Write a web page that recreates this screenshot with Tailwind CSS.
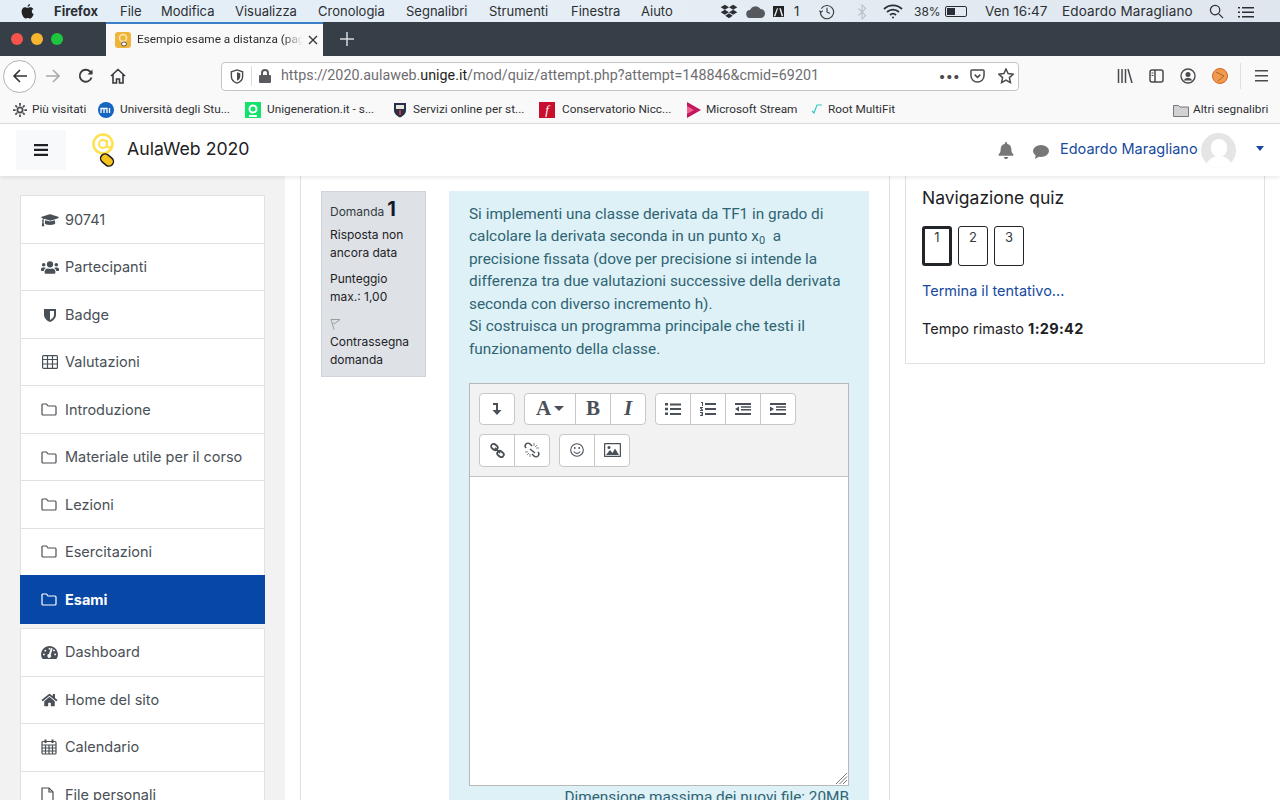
<!DOCTYPE html>
<html lang="it">
<head>
<meta charset="UTF-8">
<title>Esempio esame a distanza</title>
<script src="https://cdn.jsdelivr.net/npm/@tailwindcss/browser@4"></script>
</head>
<body class="bg-white">
<div class="w-[1280px] h-[800px] overflow-hidden flex flex-col font-['Inter','Liberation_Sans',sans-serif] text-[#1d2125]">

  <!-- macOS menu bar -->
  <div class="h-[22px] flex items-center bg-gradient-to-r from-[#e3eef7] via-[#e6eef5] to-[#dfe6ee] text-[13px] text-[#2b2f33] shrink-0 pl-[21px] pt-[1px]">
    <svg class="w-[13px] h-[15px] mr-[20px] shrink-0" viewBox="0 0 24 28" fill="#222"><path d="M17 6c-2 0-3 1.200-5 1.200S9 6 7 6C4 6 1 9 1 14c0 6 4 13 7.500 13 1.500 0 2.300-1 4-1s2.300 1 4 1C20 27 23 21 23.500 19c-2-1-3.500-2.800-3.500-5 0-2 1-3.700 3-4.800C21.500 7 19.500 6 17 6zM16.500 0C14 .3 12 2.500 12.200 5.300 14.800 5.300 17 3 16.500 0z"/></svg>
    <span class="font-bold w-[66px] shrink-0">Firefox</span>
    <span class="w-[41px] shrink-0">File</span>
    <span class="w-[74px] shrink-0">Modifica</span>
    <span class="w-[83px] shrink-0">Visualizza</span>
    <span class="w-[88px] shrink-0">Cronologia</span>
    <span class="w-[83px] shrink-0">Segnalibri</span>
    <span class="w-[82px] shrink-0">Strumenti</span>
    <span class="w-[70px] shrink-0">Finestra</span>
    <span class="w-[79px] shrink-0">Aiuto</span>
    <!-- status icons -->
    <svg class="w-[18px] h-[15px] shrink-0" viewBox="0 0 20 18" fill="#2b2f33"><path d="M5 1l5 3-5 3-5-3zM15 1l5 3-5 3-5-3zM5 7l5 3-5 3-5-3zM15 7l5 3-5 3-5-3zM10 11l4.500 3L10 17l-4.500-3z"/></svg>
    <svg class="w-[21px] h-[13px] ml-[7px] shrink-0" viewBox="0 0 20 13" fill="#55595e"><path d="M5 13a4 4 0 0 1-.5-8A6 6 0 0 1 15 4a4.500 4.500 0 0 1 0 9z"/></svg>
    <svg class="w-[11px] h-[13px] ml-[7px] shrink-0" viewBox="0 0 14 14"><path fill="#222" d="M0 0h14v14H0z"/><path fill="#e4ecf4" d="M5 3h1.500L3 13H1zM8 3h2l3 10h-2z"/></svg>
    <span class="ml-[10px] w-[24px] shrink-0">1</span>
    <svg class="w-[18px] h-[17px] shrink-0" viewBox="0 0 18 18" fill="none" stroke="#3c4044" stroke-width="1.200"><path d="M3 6a7 7 0 1 1-1 4M1 8l1.500 2L4.500 8"/><path d="M9 5v4.500l3 1.500"/></svg>
    <svg class="w-[10px] h-[16px] ml-[21px] shrink-0" viewBox="0 0 10 18" fill="none" stroke="#b9bfc6" stroke-width="1.200"><path d="M1 5l8 8-4 4V1l4 4-8 8"/></svg>
    <svg class="w-[20px] h-[15px] ml-[16px] shrink-0" viewBox="0 0 20 15" fill="none" stroke="#2b2f33" stroke-width="1.800"><path d="M1 5a13 13 0 0 1 18 0M4 8a9 9 0 0 1 12 0M7 11a4.500 4.500 0 0 1 6 0"/><circle cx="10" cy="13.500" r="1" fill="#2b2f33" stroke="none"/></svg>
    <span class="ml-[11px] text-[12px] w-[31px] shrink-0">38%</span>
    <div class="w-[22px] h-[11px] border border-[#2b2f33] rounded-[2px] p-[1px] shrink-0"><div class="w-[8px] h-full bg-[#2b2f33]"></div></div>
    <span class="ml-[18px] w-[63px] whitespace-nowrap shrink-0 text-[13.500px]">Ven 16:47</span>
    <span class="ml-[14px] w-[132px] whitespace-nowrap shrink-0 text-[13.500px] tracking-[0.15px]">Edoardo Maragliano</span>
    <svg class="w-[15px] h-[15px] ml-[15px] shrink-0" viewBox="0 0 16 16" fill="none" stroke="#2b2f33" stroke-width="1.300"><circle cx="6.500" cy="6.500" r="5"/><path d="M10.500 10.500L15 15"/></svg>
    <svg class="w-[16px] h-[12px] ml-[14px] shrink-0" viewBox="0 0 16 12" fill="#2b2f33"><path d="M0 1h2v1.500H0zM4 1h12v1.500H4zM0 5.500h2V7H0zM4 5.500h12V7H4zM0 10h2v1.500H0zM4 10h12v1.500H4z"/></svg>
  </div>

  <!-- Tab strip -->
  <div class="h-[34px] flex bg-[#363f48] shrink-0">
    <div class="w-[106px] flex items-center gap-[8px] pl-[11px] shrink-0">
      <span class="w-[12px] h-[12px] rounded-full bg-[#f4544c]"></span>
      <span class="w-[12px] h-[12px] rounded-full bg-[#f6b52f]"></span>
      <span class="w-[12px] h-[12px] rounded-full bg-[#1ec63f]"></span>
    </div>
    <div class="w-[217px] h-[34px] bg-[#f9f9fa] border-t-2 border-[#3a7fc8] flex items-center pl-[9px] text-[11.800px] text-[#2c2c2e] font-['Roboto',sans-serif] shrink-0">
      <span class="w-[16px] h-[16px] rounded-[3px] bg-[#f0b43c] mr-[6px] shrink-0 flex items-center justify-center">
        <svg class="w-[12px] h-[14px]" viewBox="0 0 12 14"><circle cx="6" cy="5" r="3.500" fill="none" stroke="#fbe9b0" stroke-width="1.500"/><ellipse cx="7" cy="11" rx="2.500" ry="2" fill="#fff" stroke="#333" stroke-width=".8"/></svg>
      </span>
      <span class="whitespace-nowrap overflow-hidden w-[166px] shrink-0 [mask-image:linear-gradient(to_right,black_88%,transparent)]">Esempio esame a distanza (pagina 1)</span>
      <svg class="w-[10px] h-[10px] ml-[5px] shrink-0" viewBox="0 0 10 10" stroke="#333" stroke-width="1.300"><path d="M1 1l8 8M9 1l-8 8"/></svg>
    </div>
    <svg class="w-[14px] h-[14px] ml-[17px] mt-[10px]" viewBox="0 0 14 14" stroke="#d6d9dc" stroke-width="1.500"><path d="M7 0v14M0 7h14"/></svg>
  </div>

  <!-- Nav bar -->
  <div class="h-[38px] flex items-center bg-[#f9f9fa] shrink-0 pl-[3px] pt-[2px] text-[#3d3d40]">
    <div class="w-[33px] h-[33px] rounded-full border border-[#b1b1b3] bg-white flex items-center justify-center shrink-0">
      <svg class="w-[16px] h-[16px]" viewBox="0 0 16 16" fill="none" stroke="#333" stroke-width="1.600"><path d="M15 8H2M8 2L2 8l6 6"/></svg>
    </div>
    <svg class="w-[16px] h-[16px] ml-[9px] shrink-0" viewBox="0 0 16 16" fill="none" stroke="#a9a9ab" stroke-width="1.600"><path d="M1 8h13M8 2l6 6-6 6"/></svg>
    <svg class="w-[16px] h-[16px] ml-[17px] shrink-0" viewBox="0 0 16 16" fill="none" stroke="#38383d" stroke-width="1.800"><path d="M13.500 9.500A6 6 0 1 1 12 3.500L14 5.500"/><path d="M14.500 1.500v5h-5" fill="#38383d" stroke="none"/></svg>
    <svg class="w-[16px] h-[16px] ml-[16px] shrink-0" viewBox="0 0 16 16" fill="none" stroke="#38383d" stroke-width="1.600"><path d="M1 8l7-6.500L15 8M3 6.500V15h3.500v-4h3v4H13V6.500"/></svg>
    <div class="w-[798px] h-[29px] ml-[95px] bg-white border border-[#c5c5c7] rounded-[4px] flex items-center shrink-0 pl-[8px]">
      <svg class="w-[14px] h-[15px] shrink-0" viewBox="0 0 14 16" fill="none" stroke="#4a4a4f" stroke-width="1.500"><path d="M7 1l6 2v5c0 4-3 6-6 7-3-1-6-3-6-7V3z"/><path d="M7 3.500l3.500 1V8c0 2-1.500 3.500-3.500 4.500z" fill="#4a4a4f" stroke="none"/></svg>
      <div class="w-px h-[20px] bg-[#dcdcde] ml-[7px] shrink-0"></div>
      <svg class="w-[12px] h-[14px] ml-[7px] shrink-0" viewBox="0 0 12 14" fill="#5b5b5f"><path d="M2 6V4a4 4 0 0 1 8 0v2h1a1 1 0 0 1 1 1v6a1 1 0 0 1-1 1H1a1 1 0 0 1-1-1V7a1 1 0 0 1 1-1zm2 0h4V4a2 2 0 0 0-4 0z"/></svg>
      <span class="ml-[10px] text-[14.300px] text-[#6e6e72] font-['Roboto',sans-serif] whitespace-nowrap w-[660px] shrink-0">https://2020.aulaweb.<span class="text-[#1f1f22]">unige.it</span>/mod/quiz/attempt.php?attempt=148846&amp;cmid=69201</span>
      <span class="ml-[-2px] text-[#4a4a4f] text-[13px] font-bold tracking-[1px] w-[20px] leading-[10px] shrink-0 whitespace-nowrap">•••</span>
      <svg class="w-[15px] h-[14px] ml-[11px] shrink-0" viewBox="0 0 16 15" fill="none" stroke="#4a4a4f" stroke-width="1.600"><path d="M2 1h12a1 1 0 0 1 1 1v5a7 7 0 0 1-14 0V2a1 1 0 0 1 1-1z"/><path d="M5 6l3 3 3-3"/></svg>
      <svg class="w-[16px] h-[16px] ml-[13px] shrink-0" viewBox="0 0 16 16" fill="none" stroke="#4a4a4f" stroke-width="1.500"><path d="M8 1l2.100 4.600 5 .6-3.700 3.400 1 5L8 12.100 3.600 14.600l1-5L.9 6.200l5-.6z"/></svg>
    </div>
    <svg class="w-[16px] h-[14px] ml-[98px] shrink-0" viewBox="0 0 15 14" stroke="#4a4a4f" stroke-width="1.500" fill="none"><path d="M1 0v14M4.500 0v14M8 0v14M10.500 0l4 14"/></svg>
    <svg class="w-[17px] h-[14px] ml-[15px] shrink-0" viewBox="0 0 15 14" fill="none" stroke="#4a4a4f" stroke-width="1.500"><rect x="1" y="1" width="13" height="12" rx="2"/><path d="M6 1v12"/><path d="M2.500 4H4.500M2.500 6.500H4.500" stroke-width="1"/></svg>
    <svg class="w-[16px] h-[16px] ml-[15px] shrink-0" viewBox="0 0 16 16"><circle cx="8" cy="8" r="7" fill="none" stroke="#4a4a4f" stroke-width="1.400"/><circle cx="8" cy="6.500" r="2.500" fill="#4a4a4f"/><path d="M3.500 12.500a5 5 0 0 1 9 0z" fill="#4a4a4f"/></svg>
    <svg class="w-[16px] h-[16px] ml-[16px] shrink-0" viewBox="0 0 16 16"><circle cx="8" cy="8" r="7.500" fill="#ef9a4c" stroke="#d9632b"/><path d="M4 4l8 4-6 5" fill="none" stroke="#a9622c"/></svg>
    <div class="w-px h-[26px] bg-[#e0e0e2] ml-[12px] shrink-0"></div>
    <svg class="w-[13px] h-[12px] ml-[14px] shrink-0" viewBox="0 0 13 12" fill="#4a4a4f"><path d="M0 0h13v1.600H0zM0 5h13v1.600H0zM0 10h13v1.600H0z"/></svg>
  </div>

  <!-- Bookmarks bar -->
  <div class="h-[30px] flex items-center bg-[#f9f9fa] border-b border-[#dcdcde] shrink-0 pl-[13px] pt-[3px] text-[11.800px] text-[#303033] font-['Roboto',sans-serif] whitespace-nowrap">
    <svg class="w-[14px] h-[14px] shrink-0" viewBox="0 0 16 16" fill="#4a4a4f"><path d="M8 4a4 4 0 1 0 0 8 4 4 0 0 0 0-8zm0 2a2 2 0 1 1 0 4 2 2 0 0 1 0-4z"/><path d="M7 0h2v3H7zM7 13h2v3H7zM0 7h3v2H0zM13 7h3v2h-3zM2 3.400L3.400 2l2 2L4 5.400zM10.600 12L12 10.600l2 2L12.600 14zM2 12.600l2-2L5.400 12l-2 2zM10.600 4l2-2L14 3.400l-2 2z"/></svg>
    <span class="ml-[5px] w-[66px] shrink-0">Più visitati</span>
    <svg class="w-[16px] h-[16px] shrink-0" viewBox="0 0 16 16"><circle cx="8" cy="8" r="8" fill="#1565c0"/><path d="M3 11V6.500h6V11M6 6.500V11M11.500 6v5" stroke="#fff" stroke-width="1.300" fill="none"/></svg>
    <span class="ml-[6px] w-[125px] shrink-0">Università degli Stu...</span>
    <div class="w-[16px] h-[16px] bg-[#13e26b] flex items-center justify-center shrink-0">
      <svg class="w-[10px] h-[13px]" viewBox="0 0 10 13" fill="none" stroke="#fff" stroke-width="2"><circle cx="5" cy="5" r="3.500"/><path d="M1 12h8"/></svg>
    </div>
    <span class="ml-[6px] w-[126px] shrink-0">Unigeneration.it - s...</span>
    <svg class="w-[14px] h-[16px] shrink-0" viewBox="0 0 14 16"><path d="M1 1h12v7c0 4-3 6-6 7.500C4 14 1 12 1 8z" fill="#26304a"/><path d="M3 3h8v4H3z" fill="#e9e6dc"/><path d="M6 8h2v5H6z" fill="#c33"/></svg>
    <span class="ml-[6px] w-[126px] shrink-0">Servizi online per st...</span>
    <div class="w-[16px] h-[16px] bg-[#c8102e] text-white flex items-center justify-center italic font-['Liberation_Serif',serif] text-[13px] shrink-0">f</div>
    <span class="ml-[7px] w-[124px] shrink-0">Conservatorio Nicc...</span>
    <svg class="w-[16px] h-[16px] shrink-0" viewBox="0 0 16 16"><path d="M1 0l14 8L1 16z" fill="#c2185b"/><path d="M1 4l7 4-7 4z" fill="#f06292"/></svg>
    <span class="ml-[4px] w-[105px] shrink-0">Microsoft Stream</span>
    <svg class="w-[12px] h-[12px] shrink-0" viewBox="0 0 12 12" fill="none" stroke="#35c9c0" stroke-width="1.200"><path d="M1 7l2 2 3-8h5"/></svg>
    <span class="ml-[5px] w-[345px] shrink-0">Root MultiFit</span>
    <svg class="w-[16px] h-[13px] shrink-0" viewBox="0 0 16 13"><path d="M.5 1.500h5l1.500 1.500h8.500v9.500H.5z" fill="#d2d2d4" stroke="#77777b"/></svg>
    <span class="ml-[4px] shrink-0">Altri segnalibri</span>
  </div>

  <!-- Moodle header -->
  <header class="h-[52px] relative z-10 bg-white shadow-[0_2px_4px_rgba(0,0,0,0.08)] flex items-center shrink-0 pl-[16px]">
    <div class="w-[50px] h-[40px] bg-[#f8f9fa] flex items-center justify-center shrink-0">
      <svg class="w-[14px] h-[12px]" viewBox="0 0 14 12" fill="#1d2125"><path d="M0 0h14v2.300H0zM0 4.800h14v2.300H0zM0 9.700h14V12H0z"/></svg>
    </div>
    <svg class="w-[26px] h-[36px] ml-[25px] shrink-0" viewBox="0 0 26 36"><circle cx="12" cy="12" r="9.500" fill="none" stroke="#ffe14d" stroke-width="2.500"/><circle cx="12" cy="12" r="4" fill="none" stroke="#ffe14d" stroke-width="2"/><path d="M16 8v6c0 2 3 2 3 0" fill="none" stroke="#ffe14d" stroke-width="2"/><rect x="9" y="23.500" width="14" height="9" rx="4.500" transform="rotate(40 16 28)" fill="#f6c21c" stroke="#1d1d1d" stroke-width="1.500"/></svg>
    <span class="ml-[10px] mb-[2px] text-[17.700px] text-[#1d2125] whitespace-nowrap w-[123px] shrink-0">AulaWeb 2020</span>
    <svg class="w-[16px] h-[17px] ml-[748px] shrink-0" viewBox="0 0 448 512" fill="#777"><path d="M224 512c35 0 64-29 64-64H160c0 35 29 64 64 64zm215-150c-19-21-55-52-55-154 0-78-54-140-128-155V32a32 32 0 1 0-64 0v21C118 68 64 130 64 208c0 102-36 133-55 154-6 6-9 14-9 22 0 16 13 32 32 32h384c19 0 32-16 32-32 0-8-3-16-9-22z"/></svg>
    <svg class="w-[16px] h-[14px] ml-[19px] mt-[3px] shrink-0" viewBox="0 0 16 14" fill="#777"><ellipse cx="8" cy="6" rx="8" ry="6"/><path d="M3 9l-1 5 5-3z"/></svg>
    <span class="ml-[11px] mb-[2px] text-[14.500px] text-[#174a9e] whitespace-nowrap w-[136px] shrink-0">Edoardo Maragliano</span>
    <div class="w-[35px] h-[35px] rounded-full bg-[#e5e5e5] overflow-hidden flex flex-col items-center shrink-0 ml-[5px]">
      <div class="w-[16px] h-[18px] rounded-full bg-white mt-[6px] shrink-0"></div>
      <div class="w-[28px] h-[16px] rounded-t-full bg-white mt-[-1px] shrink-0"></div>
    </div>
    <div class="ml-[20px] w-0 h-0 border-x-[4px] border-x-transparent border-t-[5px] border-t-[#174a9e] mb-[3px]"></div>
  </header>

  <!-- Page body -->
  <div class="flex-1 flex overflow-hidden">
    <!-- Sidebar -->
    <aside class="w-[285px] shrink-0 bg-[#f2f2f2] pl-[20px] pr-[20px] pt-[19px] text-[14.500px] text-[#495057]">
      <div class="bg-white border border-[#dee2e6] border-b-0">
        <div class="h-[47.500px] pt-[1px] border-b border-[#dee2e6] flex items-center pl-[20px] gap-[6px]">
          <svg class="w-[18px] h-[14px] shrink-0" viewBox="0 0 640 512" fill="#495057"><path d="M623 137L332 48a48 48 0 0 0-24 0L17 137c-23 7-23 39 0 46l51 16c-11 14-18 31-19 50-12 7-19 20-19 35 0 13 6 25 15 32L18 466c-2 10 5 20 16 20h60c10 0 18-10 16-20L83 316c9-7 15-19 15-32 0-14-7-26-18-34 1-16 9-29 21-38l207 64c10 3 29 6 48 0l267-82c23-7 23-39 0-46zM352 306c-29 9-53 4-64 0l-145-44-14 114c0 36 86 64 191 64s191-28 191-64l-14-114z"/></svg>
          <span>90741</span>
        </div>
        <div class="h-[47.500px] pt-[1px] border-b border-[#dee2e6] flex items-center pl-[20px] gap-[6px]">
          <svg class="w-[18px] h-[15px] shrink-0" viewBox="0 0 640 512" fill="#495057"><path d="M96 224a64 64 0 1 0 0-128 64 64 0 0 0 0 128zm448 0a64 64 0 1 0 0-128 64 64 0 0 0 0 128zm32 32h-64c-18 0-34 7-45 19 40 22 69 62 75 109h66c18 0 32-14 32-32v-32c0-35-29-64-64-64zm-256 0a112 112 0 1 0 0-224 112 112 0 0 0 0 224zm77 32h-8a155 155 0 0 1-138 0h-8c-64 0-115 52-115 115v29c0 26 21 48 48 48h288c26 0 48-22 48-48v-29c0-63-52-115-115-115zM173 275c-11-12-27-19-45-19H64c-35 0-64 29-64 64v32c0 18 14 32 32 32h66c6-47 35-87 75-109z"/></svg>
          <span>Partecipanti</span>
        </div>
        <div class="h-[47.500px] pt-[1px] border-b border-[#dee2e6] flex items-center pl-[20px] gap-[6px]">
          <span class="w-[18px] flex justify-center shrink-0"><svg class="w-[12px] h-[14px]" viewBox="0 0 12 14"><path d="M0 1h12v6c0 3-3 6-6 7-3-1-6-4-6-7z" fill="#495057"/><path d="M6 3v9c2-1 4-3 4-5V3z" fill="#fff"/></svg></span>
          <span>Badge</span>
        </div>
        <div class="h-[47.500px] pt-[1px] border-b border-[#dee2e6] flex items-center pl-[20px] gap-[6px]">
          <svg class="w-[18px] h-[14px] shrink-0" viewBox="0 0 18 14" fill="none" stroke="#495057" stroke-width="1.200"><rect x="1.600" y=".6" width="14.800" height="12.800" rx="1"/><path d="M1.600 4.500h14.800M1.600 9h14.800M6.500 .6v12.800M11.500 .6v12.800"/></svg>
          <span>Valutazioni</span>
        </div>
        <div class="h-[47.500px] pt-[1px] border-b border-[#dee2e6] flex items-center pl-[20px] gap-[6px]">
          <svg class="w-[16px] h-[13px] mr-[2px] shrink-0" viewBox="0 0 16 13" fill="none" stroke="#495057" stroke-width="1.200"><path d="M1 3V2a1 1 0 0 1 1-1h3.500l1.500 2h7a1 1 0 0 1 1 1v7a1 1 0 0 1-1 1H2a1 1 0 0 1-1-1z"/></svg>
          <span>Introduzione</span>
        </div>
        <div class="h-[47.500px] pt-[1px] border-b border-[#dee2e6] flex items-center pl-[20px] gap-[6px]">
          <svg class="w-[16px] h-[13px] mr-[2px] shrink-0" viewBox="0 0 16 13" fill="none" stroke="#495057" stroke-width="1.200"><path d="M1 3V2a1 1 0 0 1 1-1h3.500l1.500 2h7a1 1 0 0 1 1 1v7a1 1 0 0 1-1 1H2a1 1 0 0 1-1-1z"/></svg>
          <span>Materiale utile per il corso</span>
        </div>
        <div class="h-[47.500px] pt-[1px] border-b border-[#dee2e6] flex items-center pl-[20px] gap-[6px]">
          <svg class="w-[16px] h-[13px] mr-[2px] shrink-0" viewBox="0 0 16 13" fill="none" stroke="#495057" stroke-width="1.200"><path d="M1 3V2a1 1 0 0 1 1-1h3.500l1.500 2h7a1 1 0 0 1 1 1v7a1 1 0 0 1-1 1H2a1 1 0 0 1-1-1z"/></svg>
          <span>Lezioni</span>
        </div>
        <div class="h-[46.500px] flex items-center pl-[20px] gap-[6px]">
          <svg class="w-[16px] h-[13px] mr-[2px] shrink-0" viewBox="0 0 16 13" fill="none" stroke="#495057" stroke-width="1.200"><path d="M1 3V2a1 1 0 0 1 1-1h3.500l1.500 2h7a1 1 0 0 1 1 1v7a1 1 0 0 1-1 1H2a1 1 0 0 1-1-1z"/></svg>
          <span>Esercitazioni</span>
        </div>
      </div>
      <div class="h-[49px] bg-[#0747a6] text-white font-bold flex items-center pl-[21px] gap-[6px]">
        <svg class="w-[16px] h-[13px] mr-[2px] shrink-0" viewBox="0 0 16 13" fill="none" stroke="#fff" stroke-width="1.200"><path d="M1 3V2a1 1 0 0 1 1-1h3.500l1.500 2h7a1 1 0 0 1 1 1v7a1 1 0 0 1-1 1H2a1 1 0 0 1-1-1z"/></svg>
        <span>Esami</span>
      </div>
      <div class="bg-white border border-[#dee2e6] border-b-0 mt-[4px]">
        <div class="h-[47.500px] border-b border-[#dee2e6] flex items-center pl-[20px] gap-[6px]">
          <svg class="w-[17px] h-[15px] mr-[1px] shrink-0" viewBox="0 0 576 512" fill="#495057"><path d="M288 32C129 32 0 161 0 320c0 53 14 102 39 145 6 9 16 15 27 15h444c11 0 21-6 27-15 25-43 39-92 39-145 0-159-129-288-288-288zm0 64a32 32 0 1 1 0 64 32 32 0 0 1 0-64zM96 352a32 32 0 1 1 0-64 32 32 0 0 1 0 64zm48-128a32 32 0 1 1 0-64 32 32 0 0 1 0 64zm247-78l-61 185a64 64 0 1 1-61-20l61-185a24 24 0 1 1 61 20zm17 30a32 32 0 1 1 62 16 32 32 0 0 1-62-16zm72 176a32 32 0 1 1 0-64 32 32 0 0 1 0 64z"/></svg>
          <span>Dashboard</span>
        </div>
        <div class="h-[47.500px] border-b border-[#dee2e6] flex items-center pl-[20px] gap-[6px]">
          <svg class="w-[17px] h-[14px] mr-[1px] shrink-0" viewBox="0 0 576 512" fill="#495057"><path d="M280 148L96 300v164a16 16 0 0 0 16 16l112 0a16 16 0 0 0 16-16v-96a16 16 0 0 1 16-16h64a16 16 0 0 1 16 16v96a16 16 0 0 0 16 16h112a16 16 0 0 0 16-16V300L296 148a12 12 0 0 0-16 0zm292 103l-84-69V44a12 12 0 0 0-12-12h-56a12 12 0 0 0-12 12v73l-89-74a48 48 0 0 0-61 0L4 251a12 12 0 0 0-2 17l26 31a12 12 0 0 0 17 2L280 107a12 12 0 0 1 16 0l235 194a12 12 0 0 0 17-2l26-31a12 12 0 0 0-2-17z"/></svg>
          <span>Home del sito</span>
        </div>
        <div class="h-[47.500px] border-b border-[#dee2e6] flex items-center pl-[20px] gap-[6px]">
          <svg class="w-[16px] h-[16px] mr-[2px] shrink-0" viewBox="0 0 16 16" fill="none" stroke="#495057" stroke-width="1.200"><rect x="1" y="2.500" width="14" height="12.500" rx="1"/><path d="M1 6h14M1 9h14M1 12h14M4.500 6v9M8 6v9M11.500 6v9"/><path d="M4.500 .5v3.500M11.500 .5v3.500" stroke-width="2"/></svg>
          <span>Calendario</span>
        </div>
        <div class="h-[47.500px] flex items-center pl-[20px] gap-[6px]">
          <svg class="w-[13px] h-[16px] mr-[5px] shrink-0" viewBox="0 0 13 16" fill="none" stroke="#495057" stroke-width="1.200"><path d="M1 1h7l4 4v10H1z"/><path d="M8 1v4h4"/></svg>
          <span>File personali</span>
        </div>
      </div>
    </aside>

    <!-- Main column -->
    <main class="w-[590px] ml-[15px] shrink-0 border-x border-[#dee2e6] bg-white flex pt-[15px] pl-[20px] items-start">
      <div class="w-[105px] h-[186px] bg-[#dee2e6] border border-[#cfd4da] text-[12px] text-[#1d2125] pl-[8px] pt-[8px] leading-[18px] shrink-0">
        <div class="h-[24px] flex items-baseline gap-[3px]"><span class="text-[#343a40]">Domanda</span><span class="text-[20px] font-bold text-[#141a2e]">1</span></div>
        <div class="mt-[2px]">Risposta non<br>ancora data</div>
        <div class="mt-[8px]">Punteggio<br>max.: 1,00</div>
        <svg class="w-[11px] h-[11px] mt-[13px]" viewBox="0 0 11 11" fill="none" stroke="#8a8a8a" stroke-width=".8"><path d="M4 10.500L1 .5h9L5.500 4 3 4.500"/></svg>
        <div class="mt-[3px]">Contrassegna<br>domanda</div>
      </div>
      <section class="w-[420px] ml-[23px] h-[700px] bg-[#def1f7] pl-[20px] pr-[20px] pt-[11.500px] text-[#2f6473] shrink-0 font-['Roboto',sans-serif]">
        <p class="text-[15.350px] leading-[22.500px]">Si implementi una classe derivata da TF1 in grado di calcolare la derivata seconda in un punto x<sub class="text-[11px] leading-none">0</sub>&nbsp; a precisione fissata (dove per precisione si intende la differenza tra due valutazioni successive della derivata seconda con diverso incremento h).<br>Si costruisca un programma principale che testi il funzionamento della classe.</p>
        <!-- Editor -->
        <div class="mt-[22.500px] border border-[#b8b8b8] bg-[#f2f2f2] w-[380px]">
          <div class="h-[93px] border-b border-[#c4c4c4] pl-[9px] pt-[9px] flex flex-col gap-[9px]">
            <div class="flex gap-[9px]">
              <div class="h-[32px] flex bg-white border border-[#c8c8c8] rounded-[4px]">
                <div class="w-[34px] flex items-center justify-center"><svg class="w-[10px] h-[12px]" viewBox="0 0 10 12" fill="#495057"><path d="M1 0h5v7h3.500L5 12 .5 7H4V2H1z"/></svg></div>
              </div>
              <div class="h-[32px] flex bg-white border border-[#c8c8c8] rounded-[4px] divide-x divide-[#c8c8c8]">
                <div class="w-[51px] flex items-center justify-center gap-[3px] font-['Liberation_Serif',serif] font-bold text-[21px] text-[#495057]">A<span class="w-0 h-0 border-x-[5px] border-x-transparent border-t-[5px] border-t-[#495057]"></span></div>
                <div class="w-[35px] flex items-center justify-center font-['Liberation_Serif',serif] font-bold text-[21px] text-[#495057]">B</div>
                <div class="w-[34px] flex items-center justify-center font-['Liberation_Serif',serif] font-bold italic text-[21px] text-[#495057]">I</div>
              </div>
              <div class="h-[32px] flex bg-white border border-[#c8c8c8] rounded-[4px] divide-x divide-[#c8c8c8]">
                <div class="w-[35px] flex items-center justify-center"><svg class="w-[16px] h-[12px]" viewBox="0 0 16 12" fill="#495057"><path d="M0 0h3v2.500H0zM5 .5h11v2H5zM0 4.700h3v2.500H0zM5 5h11v2H5zM0 9.500h3V12H0zM5 10h11v2H5z"/></svg></div>
                <div class="w-[35px] flex items-center justify-center"><svg class="w-[16px] h-[14px]" viewBox="0 0 16 14" fill="#495057"><path d="M5 1h11v2H5zM5 6h11v2H5zM5 11h11v2H5zM1 0h2v4H2V1H1zM0 5h3v1H1.500L3 8v1H0V8h1.500L0 6zM0 10h3v4H0v-1h2v-.5H1v-1h1V11H0z"/></svg></div>
                <div class="w-[35px] flex items-center justify-center"><svg class="w-[16px] h-[12px]" viewBox="0 0 16 12" fill="#495057"><path d="M0 0h16v2H0zM6 3.300h10v1.500H6zM6 6h10v1.500H6zM0 10h16v2H0zM4 3.500v5L0 6z"/></svg></div>
                <div class="w-[34px] flex items-center justify-center"><svg class="w-[16px] h-[12px]" viewBox="0 0 16 12" fill="#495057"><path d="M0 0h16v2H0zM6 3.300h10v1.500H6zM6 6h10v1.500H6zM0 10h16v2H0zM0 3.500v5L4 6z"/></svg></div>
              </div>
            </div>
            <div class="flex gap-[9px]">
              <div class="h-[33px] flex bg-white border border-[#c8c8c8] rounded-[4px] divide-x divide-[#c8c8c8]">
                <div class="w-[35px] flex items-center justify-center"><svg class="w-[15px] h-[15px]" viewBox="0 0 15 15" fill="none" stroke="#495057" stroke-width="1.800"><rect x=".9" y="1.500" width="7" height="5" rx="2.500" transform="rotate(40 4.400 4)"/><rect x="7" y="8.500" width="7" height="5" rx="2.500" transform="rotate(40 10.500 11)"/><path d="M5 5l5 5"/></svg></div>
                <div class="w-[34px] flex items-center justify-center"><svg class="w-[16px] h-[16px]" viewBox="0 0 16 16" fill="none" stroke="#495057" stroke-width="1.500"><path d="M2 6a3 3 0 0 1 0-4c1-1 3-1 4 0l2 2M14 10a3 3 0 0 1 0 4c-1 1-3 1-4 0l-2-2M6 7l5 4"/><path d="M10 1v3M13 3l-2 2M15 6h-3M1 10h3M3 13l2-2M6 15v-3" stroke="#888" stroke-width="1"/></svg></div>
              </div>
              <div class="h-[33px] flex bg-white border border-[#c8c8c8] rounded-[4px] divide-x divide-[#c8c8c8]">
                <div class="w-[35px] flex items-center justify-center"><svg class="w-[14px] h-[14px]" viewBox="0 0 14 14" fill="none" stroke="#495057" stroke-width="1.100"><circle cx="7" cy="7" r="6.300"/><path d="M3.800 8.500c1.500 2.500 5 2.500 6.400 0"/><circle cx="4.800" cy="5" r=".9" fill="#495057" stroke="none"/><circle cx="9.200" cy="5" r=".9" fill="#495057" stroke="none"/></svg></div>
                <div class="w-[34px] flex items-center justify-center"><svg class="w-[17px] h-[14px]" viewBox="0 0 17 14"><rect x=".5" y=".5" width="16" height="13" rx="1" fill="#fff" stroke="#495057" stroke-width="1.400"/><path d="M2 12l4-5 2.500 3L11 5.500 15 12z" fill="#495057"/><circle cx="5" cy="4.500" r="1.500" fill="#495057"/></svg></div>
              </div>
            </div>
          </div>
          <div class="h-[308px] bg-white flex items-end justify-end">
            <svg class="w-[13px] h-[13px]" viewBox="0 0 13 13" stroke="#777" stroke-width="1"><path d="M1 12L12 1M4.500 12L12 4.500M8 12l4-4"/></svg>
          </div>
        </div>
        <p class="text-[15.350px] leading-[16px] text-right mt-[3px] w-[380px] whitespace-nowrap">Dimensione massima dei nuovi file: 20MB</p>
      </section>
    </main>

    <!-- Right column -->
    <div class="w-[360px] ml-[15px] shrink-0 self-start h-[188px] border-x border-b border-[#dee2e6] bg-white pl-[16px] pt-[11px]">
      <h3 class="text-[17.500px] leading-[22px] text-[#1d2125]">Navigazione quiz</h3>
      <div class="flex gap-[6px] mt-[17px] text-[13px] text-[#343a40] text-center">
        <div class="w-[30px] h-[40px] border-[3px] border-[#212529] rounded-[3px] leading-[16px]">1</div>
        <div class="w-[30px] h-[40px] border border-[#212529] rounded-[3px] leading-[20px]">2</div>
        <div class="w-[30px] h-[40px] border border-[#212529] rounded-[3px] leading-[20px]">3</div>
      </div>
      <div class="mt-[15px] text-[14.500px] leading-[20px] text-[#174a9e]">Termina il tentativo...</div>
      <div class="mt-[18px] text-[14.500px] leading-[20px] text-[#1d2125]">Tempo rimasto <span class="font-bold tracking-[0.3px]">1:29:42</span></div>
    </div>
  </div>
</div>
</body>
</html>
